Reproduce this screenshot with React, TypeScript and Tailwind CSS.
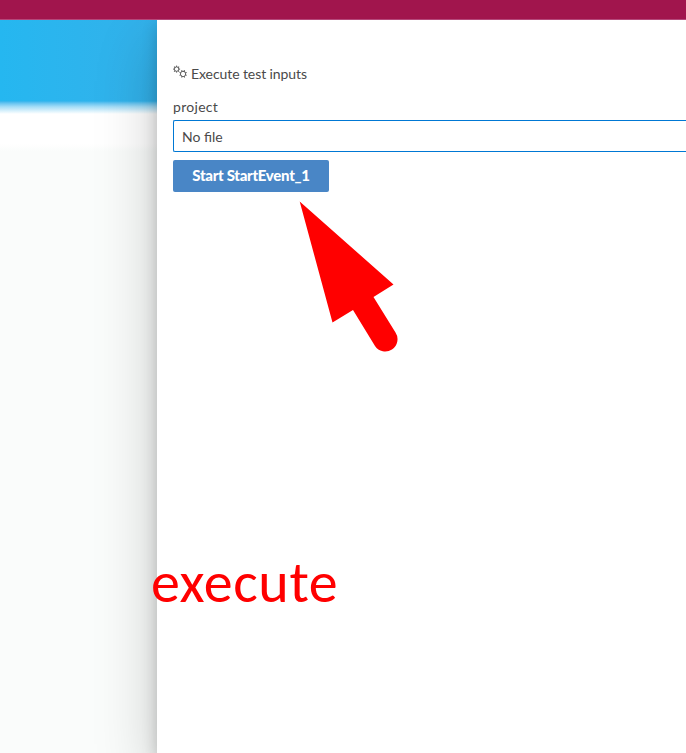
function Gear({ x, y, r, turn }: { x: number; y: number; r: number; turn: number }) {
  const spokes = [0, 45, 90, 135, 180, 225, 270, 315];
  return (
    <g transform={`translate(${x} ${y}) rotate(${turn})`}>
      <circle r={r} strokeWidth="0.9" />
      {spokes.map((a) => (
        <path key={a} d={`M0 ${-r}V${-r - 1.3}`} transform={`rotate(${a})`} strokeWidth="1" />
      ))}
    </g>
  );
}

export default function App() {
  return (
    <div className="relative flex h-[753px] w-[686px] flex-col overflow-hidden bg-white font-['Lato',sans-serif] text-sm text-[#4a4a4a]">
      <header className="z-10 h-5 shrink-0 border-b border-[#b5487a] bg-[#a1154d]" />
      <div className="flex min-h-0 flex-1 overflow-hidden">
        <div className="flex w-[157px] shrink-0 flex-col bg-[#fafcfb]">
          <div className="h-[81px] bg-linear-to-r from-[#25b7f0] to-[#33b1ea]" />
          <div className="h-[13px] bg-linear-to-b from-[#2bb3ec] via-[#a5def7] via-45% to-white" />
          <div className="h-[30px] bg-white" />
          <div className="h-[7px] bg-linear-to-b from-white to-[#fafcfb]" />
        </div>
        <main className="z-10 flex flex-1 flex-col bg-white pl-4 pt-[44px] shadow-[0_25.6px_57.6px_rgba(0,0,0,0.22),0_4.8px_14.4px_rgba(0,0,0,0.18)]">
          <div className="flex h-5 items-center">
            <svg className="mr-1 h-[14px] w-[14px] shrink-0 -translate-y-[2px]" viewBox="0 0 14 14" fill="none" stroke="#555555">
              <Gear x={3.6} y={4.1} r={2.2} turn={0} />
              <Gear x={10.1} y={8.9} r={2.6} turn={22.5} />
            </svg>
            <h1 className="tracking-[-0.08px]">Execute test inputs</h1>
          </div>
          <label className="mt-[13px] h-5 leading-5 tracking-[0.3px]">project</label>
          <div className="mt-[3px] flex h-8 items-center rounded-l-[2px] border border-r-0 border-[#0078d4] pl-2 pt-px">
            No file
          </div>
          <button className="mt-2 flex h-8 w-[156px] items-center justify-center rounded-[2px] bg-[#4986c6] text-[15px] font-black tracking-[-0.3px] text-white">
            Start StartEvent_1
          </button>
        </main>
      </div>
      <svg className="absolute left-0 top-0 z-20 h-[753px] w-[686px]" viewBox="0 0 686 753">
        <path d="M299.7 201.5L393.5 284.5L373.5 297L395.5 332.5A12 12 0 0 1 375 346L353 310L332.5 322.5Z" fill="#ff0000" />
      </svg>
      <p className="absolute left-[151px] top-[548px] z-20 font-['Carlito','Noto_Sans',sans-serif] text-[58px] leading-[70px] tracking-[0.6px] text-[#ff0000]">
        execute
      </p>
    </div>
  );
}
